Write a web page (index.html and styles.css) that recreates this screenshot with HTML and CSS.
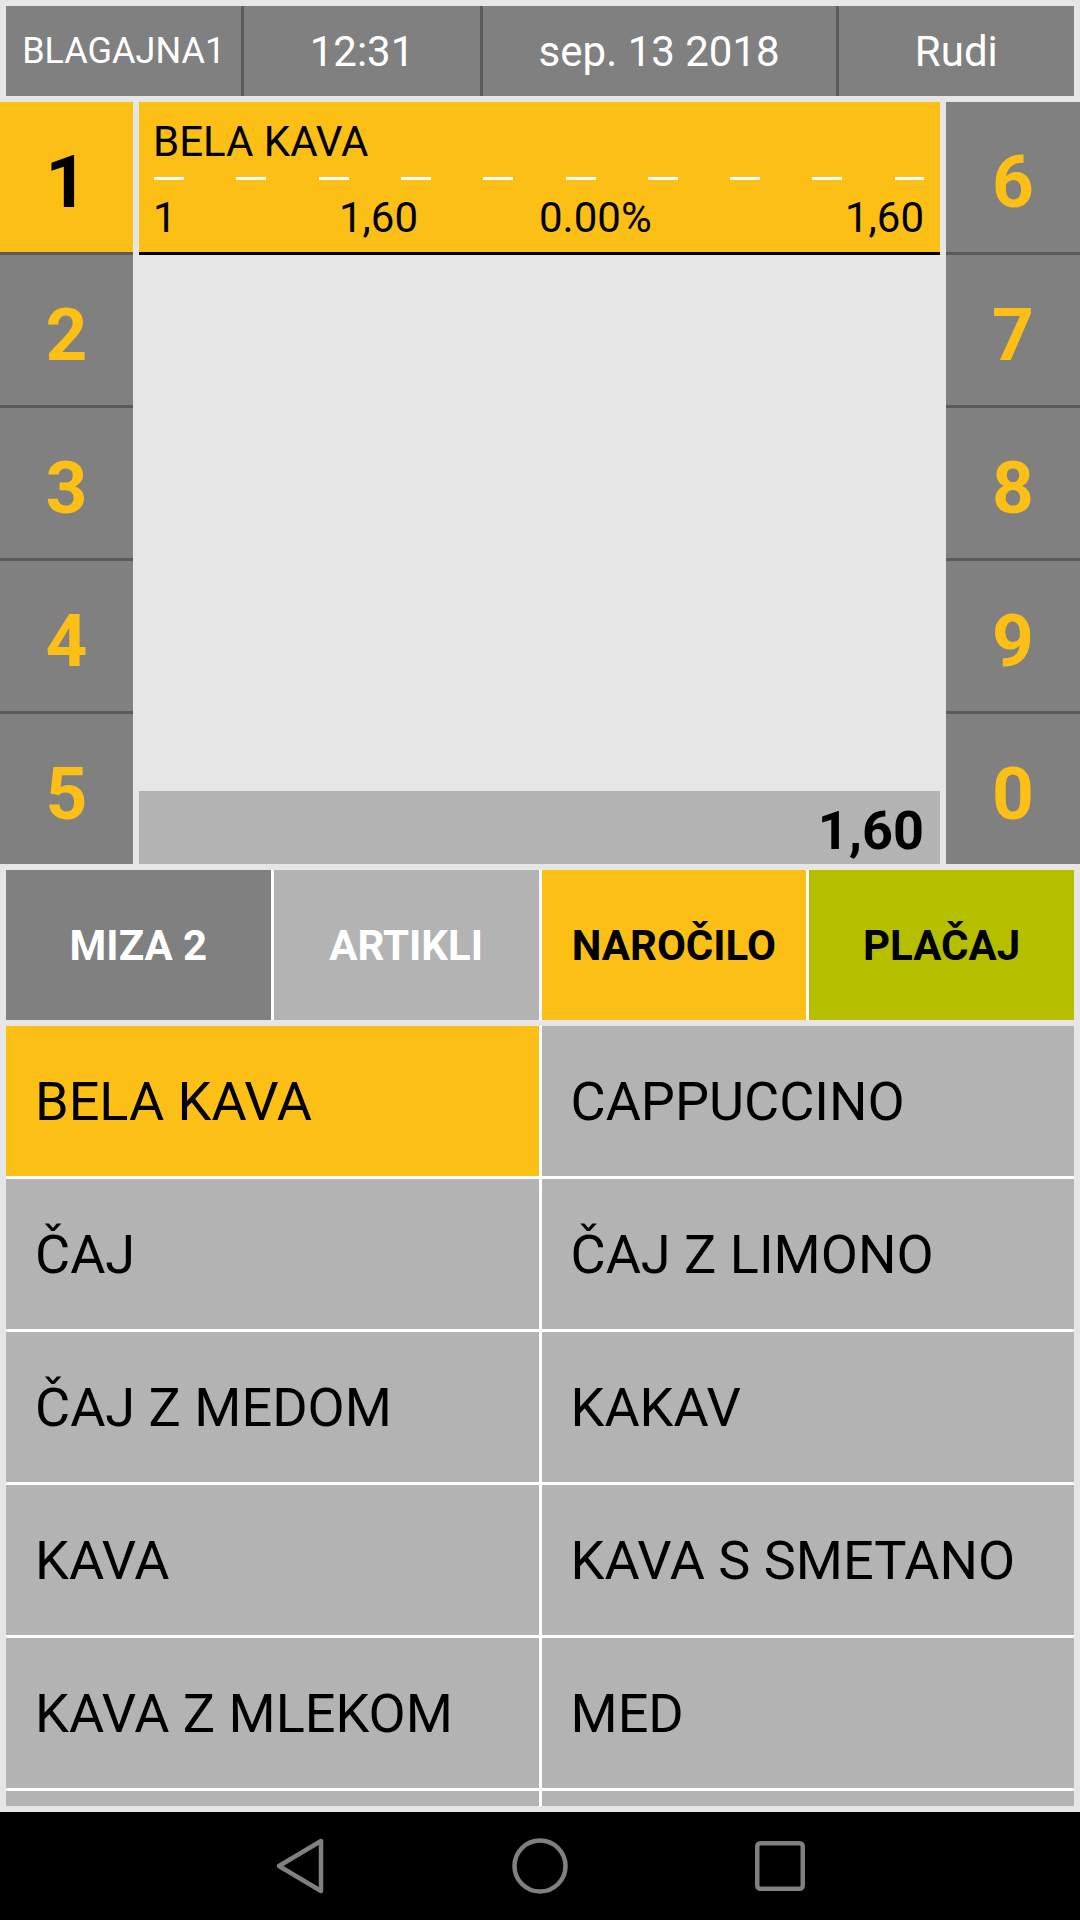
FILE: index.html
```html
<!DOCTYPE html>
<html lang="sl">
<head>
    <meta charset="UTF-8">
    <meta name="viewport" content="width=device-width, initial-scale=1.0">
    <title>Blagajna</title>
    <link rel="stylesheet" href="styles.css">
</head>
<body>
    <div class="topbar">
        <div class="top-cell top-small">BLAGAJNA1</div>
        <div class="top-cell">12:31</div>
        <div class="top-cell">sep. 13 2018</div>
        <div class="top-cell">Rudi</div>
    </div>

    <div class="main">
        <div class="keys">
            <div class="key active">1</div>
            <div class="key">2</div>
            <div class="key">3</div>
            <div class="key">4</div>
            <div class="key">5</div>
        </div>

        <div class="order">
            <div class="order-item">
                <div class="item-name">BELA KAVA</div>
                <div class="dashes"></div>
                <div class="item-values">
                    <span>1</span>
                    <span>1,60</span>
                    <span>0.00%</span>
                    <span class="right">1,60</span>
                </div>
            </div>
            <div class="total">1,60</div>
        </div>

        <div class="keys">
            <div class="key">6</div>
            <div class="key">7</div>
            <div class="key">8</div>
            <div class="key">9</div>
            <div class="key">0</div>
        </div>
    </div>

    <div class="actions">
        <div class="btn btn-table">MIZA 2</div>
        <div class="btn btn-items">ARTIKLI</div>
        <div class="btn btn-order">NAROČILO</div>
        <div class="btn btn-pay">PLAČAJ</div>
    </div>

    <div class="products">
        <div class="product selected">BELA KAVA</div>
        <div class="product">CAPPUCCINO</div>
        <div class="product">ČAJ</div>
        <div class="product">ČAJ Z LIMONO</div>
        <div class="product">ČAJ Z MEDOM</div>
        <div class="product">KAKAV</div>
        <div class="product">KAVA</div>
        <div class="product">KAVA S SMETANO</div>
        <div class="product">KAVA Z MLEKOM</div>
        <div class="product">MED</div>
        <!-- next row is scrolled out of view -->
        <div class="product"></div>
        <div class="product"></div>
    </div>

    <!-- android navigation bar -->
    <div class="navbar">
        <svg viewBox="0 0 60 60" width="60" height="60">
            <polygon points="51,5 51,55 9,30" />
        </svg>
        <svg viewBox="0 0 60 60" width="60" height="60">
            <circle cx="30" cy="30" r="25.5" />
        </svg>
        <svg viewBox="0 0 60 60" width="60" height="60">
            <rect x="7.25" y="7.25" width="45.5" height="45.5" rx="3" />
        </svg>
    </div>
</body>
</html>
```

FILE: styles.css
```css
body {
    margin: 0;
    width: 1080px;
    height: 1920px;
    overflow: hidden;
    background: #e6e6e6;
    font-family: Roboto, "Noto Sans", sans-serif;
}

/* top info bar */
.topbar {
    margin: 6px 6px 0;
    height: 90px;
    display: grid;
    grid-template-columns: 1fr 1fr 1.5fr 1fr;
    gap: 3px;
    background: #5a5a5a;
}
.top-cell {
    background: #808080;
    color: #fff;
    font-size: 42px;
    display: flex;
    align-items: center;
    justify-content: center;
}
.top-small { font-size: 36px; }

/* keypads + order */
.main {
    margin-top: 6px;
    height: 762px;
    display: grid;
    grid-template-columns: 133px 1fr 134px;
    column-gap: 6px;
}
.keys {
    display: flex;
    flex-direction: column;
}
.key {
    height: 150px;
    box-sizing: border-box;
    padding-top: 9px;
    background: #808080;
    border-bottom: 3px solid #5a5a5a;
    color: #fbbf16;
    font-size: 73px;
    font-weight: bold;
    display: flex;
    align-items: center;
    justify-content: center;
}
.key:not(:last-child) { height: 153px; }
.key:last-child { border-bottom: none; }
.key.active { background: #fbbf16; color: #000; }

.order {
    display: flex;
    flex-direction: column;
}
.order-item {
    background: #fbbf16;
    border-bottom: 3px solid #000;
    padding: 16px 16px 10px 14px;
    height: 124px;
    font-size: 42px;
    line-height: 48px;
    color: #000;
}
.dashes {
    height: 3px;
    margin: 11px 0 14px 1px;
    background: repeating-linear-gradient(to right, #fff 0 30px, transparent 30px 82.3px);
}
.item-values {
    display: grid;
    grid-template-columns: 186px 200px 1fr 1fr;
}
.right { text-align: right; }

.total {
    margin-top: auto;
    height: 73px;
    box-sizing: border-box;
    padding: 6px 16px 0 0;
    background: #b3b3b3;
    font-size: 54px;
    font-weight: bold;
    display: flex;
    align-items: center;
    justify-content: flex-end;
}

/* action buttons */
.actions {
    margin: 6px 6px 0;
    height: 150px;
    display: grid;
    grid-template-columns: repeat(4, 1fr);
    gap: 3px;
    background: #fff;
}
.btn {
    font-size: 42px;
    font-weight: bold;
    display: flex;
    align-items: center;
    justify-content: center;
}
.btn-table { background: #808080; color: #fff; }
.btn-items { background: #b3b3b3; color: #fff; }
.btn-order { background: #fbbf16; color: #000; }
.btn-pay { background: #b5bf00; color: #000; }

/* product grid */
.products {
    margin: 6px 6px 0;
    height: 780px;
    overflow: hidden;
    display: grid;
    grid-template-columns: 1fr 1fr;
    grid-auto-rows: 150px;
    gap: 3px;
    background: #fff;
}
.product {
    background: #b3b3b3;
    color: #000;
    font-size: 54px;
    padding-left: 29px;
    display: flex;
    align-items: center;
}
.product.selected { background: #fbbf16; }

.navbar {
    margin-top: 6px;
    height: 108px;
    background: #000;
    display: flex;
    align-items: center;
    justify-content: center;
    gap: 180px;
}
.navbar svg {
    fill: none;
    stroke: #808080;
    stroke-width: 4.5;
    stroke-linejoin: round;
}
```
